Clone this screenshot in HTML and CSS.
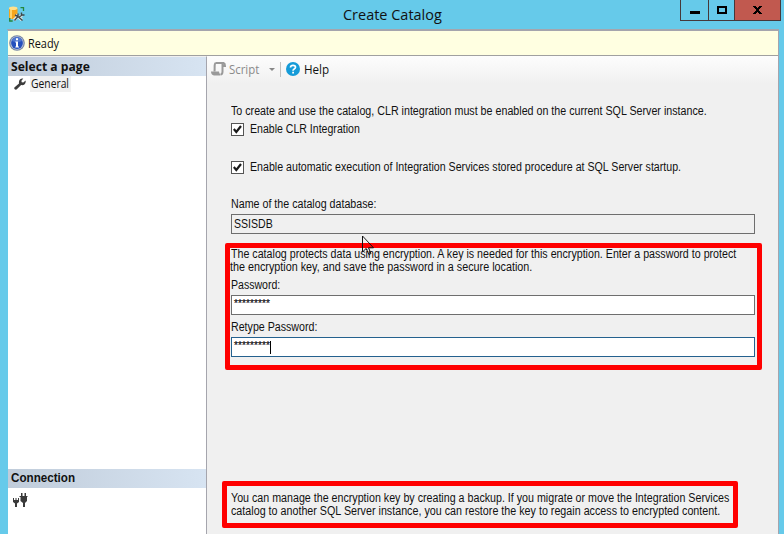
FILE: index.html
```html
<!DOCTYPE html>
<html lang="en">
<head>
<meta charset="utf-8">
<title>Create Catalog</title>
<link rel="stylesheet" href="styles.css">
</head>
<body>
<div class="window">
  <header class="titlebar">
    <svg class="app-icon" width="18" height="18" viewBox="0 0 18 18">
      <path d="M1 2.500v8.500c0 3 8.500 3 8.500 0V2.500" fill="#f5a51d"/><path d="M2 3v9l2 .8V3z" fill="#ffd36a"/>
      <ellipse cx="5.200" cy="2.300" rx="4.200" ry="1.800" fill="#ffe08b"/>
      <path d="M12.500 1.700h3V5M1.700 12v3h3" fill="none" stroke="#25873b" stroke-width="1.300"/>
      <path d="M6 14l4-3.500M8 8.500l2 2.500 4 3M12 11l2-2" fill="none" stroke="#dde8e4" stroke-width="3"/>
      <path d="M6.500 14.500l3.500-4V7.500M7 9l3 1.500 4.500 4M10.500 11.500L14 9M13.500 6.500v2.500h3" fill="none" stroke="#3f474a" stroke-width="1.400"/>
    </svg>
    <h1 class="title"><span class="t-title">Create Catalog</span></h1>
    <div class="controls">
      <span class="control min"><i></i></span>
      <span class="control max"><i></i></span>
      <span class="control close"><svg width="9" height="8" viewBox="0 0 9 8" shape-rendering="crispEdges"><path d="M0 0h3v1h1v1h1V1h1V0h3v1H8v1H7v1H6v2h1v1h1v1h1v1H6V7H5V6H4v1H3v1H0V7h1V6h1V5h1V3H2V2H1V1H0z"/></svg></span>
    </div>
  </header>
  <div class="frame">
    <div class="status">
      <svg width="16" height="16" viewBox="0 0 16 16">
        <circle cx="8" cy="8" r="7.800" fill="#7484a4"/><circle cx="8" cy="8" r="6.700" fill="#b9c4da"/><circle cx="8" cy="8" r="5.900" fill="#2450bd"/>
        <path d="M3 6a5.200 5.200 0 0 1 10 0q-5 2-10 0z" fill="#5078d0"/>
        <path d="M7 3.300h2v2H7zM6.300 6.500H9v5h1v1H6.300v-1H7v-4h-.7z" fill="#fff"/>
      </svg>
      <span class="ui t-ready">Ready</span>
    </div>
    <div class="body">
      <aside class="sidebar">
        <h2 class="side-head"><span class="t-select">Select a page</span></h2>
        <div class="page-item">
          <svg width="12" height="12" viewBox="0 0 12 12"><path d="M.4 9.600L5 5.500C4.400 2.400 6.500.1 9.300.6L7.400 2.700l.3 1.500 1.600.3L11.600 2.500c.6 3-1.600 5.200-4.500 4.600L2.600 11.600C1.300 12.200-.3 11 .4 9.600z" fill="#3c3c3c"/></svg>
          <div class="selected"><span class="ui t-general">General</span></div>
        </div>
        <h2 class="side-head connection"><span class="t-conn">Connection</span></h2>
        <svg class="plug" width="15" height="15" viewBox="0 0 15 15" fill="#3a3a3a">
          <path d="M0 5h1v2h1.500V5h1v2H5V5h1v4L4 10.500V14H2v-3.500L0 9zM8 0h1.500v3h2V0H13v3h1.500v1H14v4l-2 2v4h-2v-4L7.500 8V4H6.500V3H8z"/>
        </svg>
      </aside>
      <main class="main">
        <div class="toolbar">
          <svg class="script-icon" width="15" height="14" viewBox="0 0 15 14"><path d="M4.500 1h8q1.500.5 1.500 3h-2.500M4.500 1C3 2 4 5 3.500 9.500M11.500 2v7.500q0 3-2 3" fill="none" stroke="#999" stroke-width="2"/><path d="M0 9.500h8q0 2 1.500 3l-.5 1H3Q0 13 0 9.500z" fill="#999"/></svg>
          <span class="ui disabled t-script">Script</span>
          <i class="drop"></i><i class="sep"></i>
          <svg class="help-icon" width="14" height="14" viewBox="0 0 14 14"><circle cx="7" cy="7" r="7" fill="#159bd8"/><path d="M4.500 5.400Q4.500 3.300 7 3.300T9.500 5.300Q9.500 6.300 8.200 7T7.200 8.800" fill="none" stroke="#fff" stroke-width="1.700"/><path d="M6.200 9.800H8v1.700H6.200z" fill="#fff"/></svg>
          <span class="ui t-help">Help</span>
        </div>
        <div class="content">
          <p class="line"><span class="t-intro">To create and use the catalog, CLR integration must be enabled on the current SQL Server instance.</span></p>
          <label class="check clr"><i class="box"><svg width="9" height="9" viewBox="0 0 9 9"><path d="M.8 4l2.500 3L8 1" fill="none" stroke="#1a1a1a" stroke-width="2.200"/></svg></i><span class="t-clr">Enable CLR Integration</span></label>
          <label class="check auto"><i class="box"><svg width="9" height="9" viewBox="0 0 9 9"><path d="M.8 4l2.500 3L8 1" fill="none" stroke="#1a1a1a" stroke-width="2.200"/></svg></i><span class="t-auto">Enable automatic execution of Integration Services stored procedure at SQL Server startup.</span></label>
          <p class="line name-label"><span class="t-name">Name of the catalog database:</span></p>
          <div class="field readonly"><span class="t-db">SSISDB</span></div>
          <section class="mark key">
            <p class="line"><span class="t-k1">The catalog protects data using encryption. A key is needed for this encryption. Enter a password to protect</span></p>
            <p class="line out"><span class="t-k2">the encryption key, and save the password in a secure location.</span></p>
            <p class="line pw-label"><span class="t-pw">Password:</span></p>
            <div class="field"><span class="stars">*********</span></div>
            <p class="line re-label"><span class="t-re">Retype Password:</span></p>
            <div class="field focus"><span class="stars">*********</span><i class="caret"></i></div>
            <svg class="pointer" width="13" height="21" viewBox="0 0 13 21"><path d="M1.500 1v16l3.700-3.600 2.600 6.100 2.200-1-2.500-5.700h5z" fill="none" stroke="#111"/><path d="M2 2.500V8h5.500z" fill="#f0f0f0"/></svg>
          </section>
          <section class="mark backup">
            <p class="line"><span class="t-b1">You can manage the encryption key by creating a backup. If you migrate or move the Integration Services</span></p>
            <p class="line"><span class="t-b2">catalog to another SQL Server instance, you can restore the key to regain access to encrypted content.</span></p>
          </section>
        </div>
      </main>
    </div>
  </div>
</div>
</body>
</html>
```
FILE: styles.css
```css
* { box-sizing: border-box; }
body { margin: 0; overflow: hidden; background: #66caea; font: 12px/13px "Liberation Sans", Arial, sans-serif; color: #111; }
h1, h2, p { margin: 0; font: inherit; }
i { display: block; }
svg { display: block; flex: none; }
span { white-space: nowrap; }
[class*="t-"] { display: inline-block; transform-origin: 0 50%; }
.window { width: 784px; height: 534px; display: flex; flex-direction: column; }
.titlebar { height: 29px; display: flex; align-items: flex-start; }
.app-icon { margin: 6px 0 0 8px; }
.title { flex: 1; padding: 4px 0 0 317px; font: 15px/20px "Open Sans", "Noto Sans", sans-serif; }
.controls { display: flex; height: 21px; margin-right: 3px; border: 1px solid #46383a; border-top: 0; }
.control { display: flex; align-items: center; justify-content: center; border-left: 1px solid #46383a; }
.min { width: 27px; border-left: 0; }
.min i { width: 10px; height: 3px; margin-top: 5px; background: #000; }
.max { width: 26px; }
.max i { width: 10px; height: 8px; border: 2px solid #000; }
.close { width: 46px; background: #c1594f; }
.frame { flex: 1; min-height: 0; width: 772px; margin-left: 7px; display: flex; flex-direction: column; border: solid #a5a5ad; border-width: 2px 1px 0; border-left-color: #66caea; }
.status { height: 25px; flex: none; display: flex; align-items: center; gap: 3px; padding-left: 1px; background: #ffffe1; border-bottom: 1px solid #a0a0a0; }
.ui { font: 12px/15px "Open Sans", sans-serif; }
.body { flex: 1; min-height: 0; display: flex; }
.sidebar { width: 199px; flex: none; background: #fff; border-right: 1px solid #a5a5ad; border-top: 1px solid #f0f0f0; display: flex; flex-direction: column; }
.side-head { height: 19px; flex: none; padding: 0 3px; font: bold 12px/19px "Open Sans", sans-serif; background: linear-gradient(90deg, #c0ccda, #d7e4f2); }
.page-item { display: flex; gap: 4px; padding: 0 0 0 6px; align-items: center; height: 16px; }
.selected { background: #f0f0f0; padding: 0 1px; width: 41px; height: 16px; }
.connection { margin-top: auto; font: bold 12px/19px "Liberation Sans", sans-serif; }
.plug { margin: 5px 0 26px 5px; }
.main { flex: 1; min-width: 0; background: #f0f0f0; display: flex; flex-direction: column; }
.toolbar { height: 28px; flex: none; display: flex; align-items: center; padding: 0 0 2px 4px; background: linear-gradient(#fdfdfd, #f0f0f0); }
.disabled { color: #8a8a8a; }
.script-icon { margin-right: 3px; }
.drop { margin-left: 9px; border: 3px solid transparent; border-top-color: #888; border-bottom: 0; }
.sep { width: 1px; height: 15px; margin: 0 5px; background: #c0c0c0; }
.help-icon { margin-right: 4px; }
.content { flex: 1; display: flex; flex-direction: column; padding: 21px 0 0 24px; }
.line { height: 13px; }
.check { display: flex; align-items: center; height: 13px; gap: 6px; }
.clr { margin-top: 5px; }
.auto { margin-top: 25px; }
.box { width: 13px; height: 13px; background: #fff; border: 1px solid #555; padding: 1px; }
.name-label { margin-top: 24px; }
.field { width: 524px; height: 20px; border: 1px solid #6e6e6e; background: #fff; padding: 3px 2px; display: flex; }
.readonly { margin-top: 3px; background: #f0f0f0; }
.focus { border-color: #24618e; }
.mark { border: 5px solid #f00; border-radius: 2px; position: relative; }
.key { width: 537px; height: 127px; margin: 9px 0 0 -6px; padding-left: 1px; }
.out { margin-left: -1px; }
.pw-label { margin-top: 5px; }
.pw-label + .field { margin-top: 3px; }
.re-label { margin-top: 6px; }
.re-label + .field { margin-top: 3px; }
.stars { font-size: 10px; letter-spacing: .11px; line-height: 10px; -webkit-text-stroke: .2px #111; }
.caret { width: 1px; height: 13px; background: #000; }
.pointer { position: absolute; left: 131px; top: -13px; }
.backup { width: 516px; height: 47px; margin: 111px 0 0 -9px; padding: 6px 0 0 4px; }

/* Condensed widths of the dialog face */
.t-title { transform: scaleX(.965); }
.t-ready { transform: scaleX(.91); }
.t-select { transform: scaleX(1.01); }
.t-general { transform: scaleX(.86); }
.t-conn { transform: scaleX(.97); }
.t-script { width: 31px; transform: scaleX(.95); }
.t-help { transform: scaleX(.97); }
.t-intro { transform: scaleX(.891); }
.t-clr { transform: scaleX(.88); }
.t-auto { transform: scaleX(.886); }
.t-name { transform: scaleX(.89); }
.t-db { transform: scaleX(.88); }
.t-k1 { transform: scaleX(.889); }
.t-k2 { transform: scaleX(.898); }
.t-pw { transform: scaleX(.88); }
.t-re { transform: scaleX(.887); }
.t-b1 { transform: scaleX(.89); }
.t-b2 { transform: scaleX(.894); }
```
